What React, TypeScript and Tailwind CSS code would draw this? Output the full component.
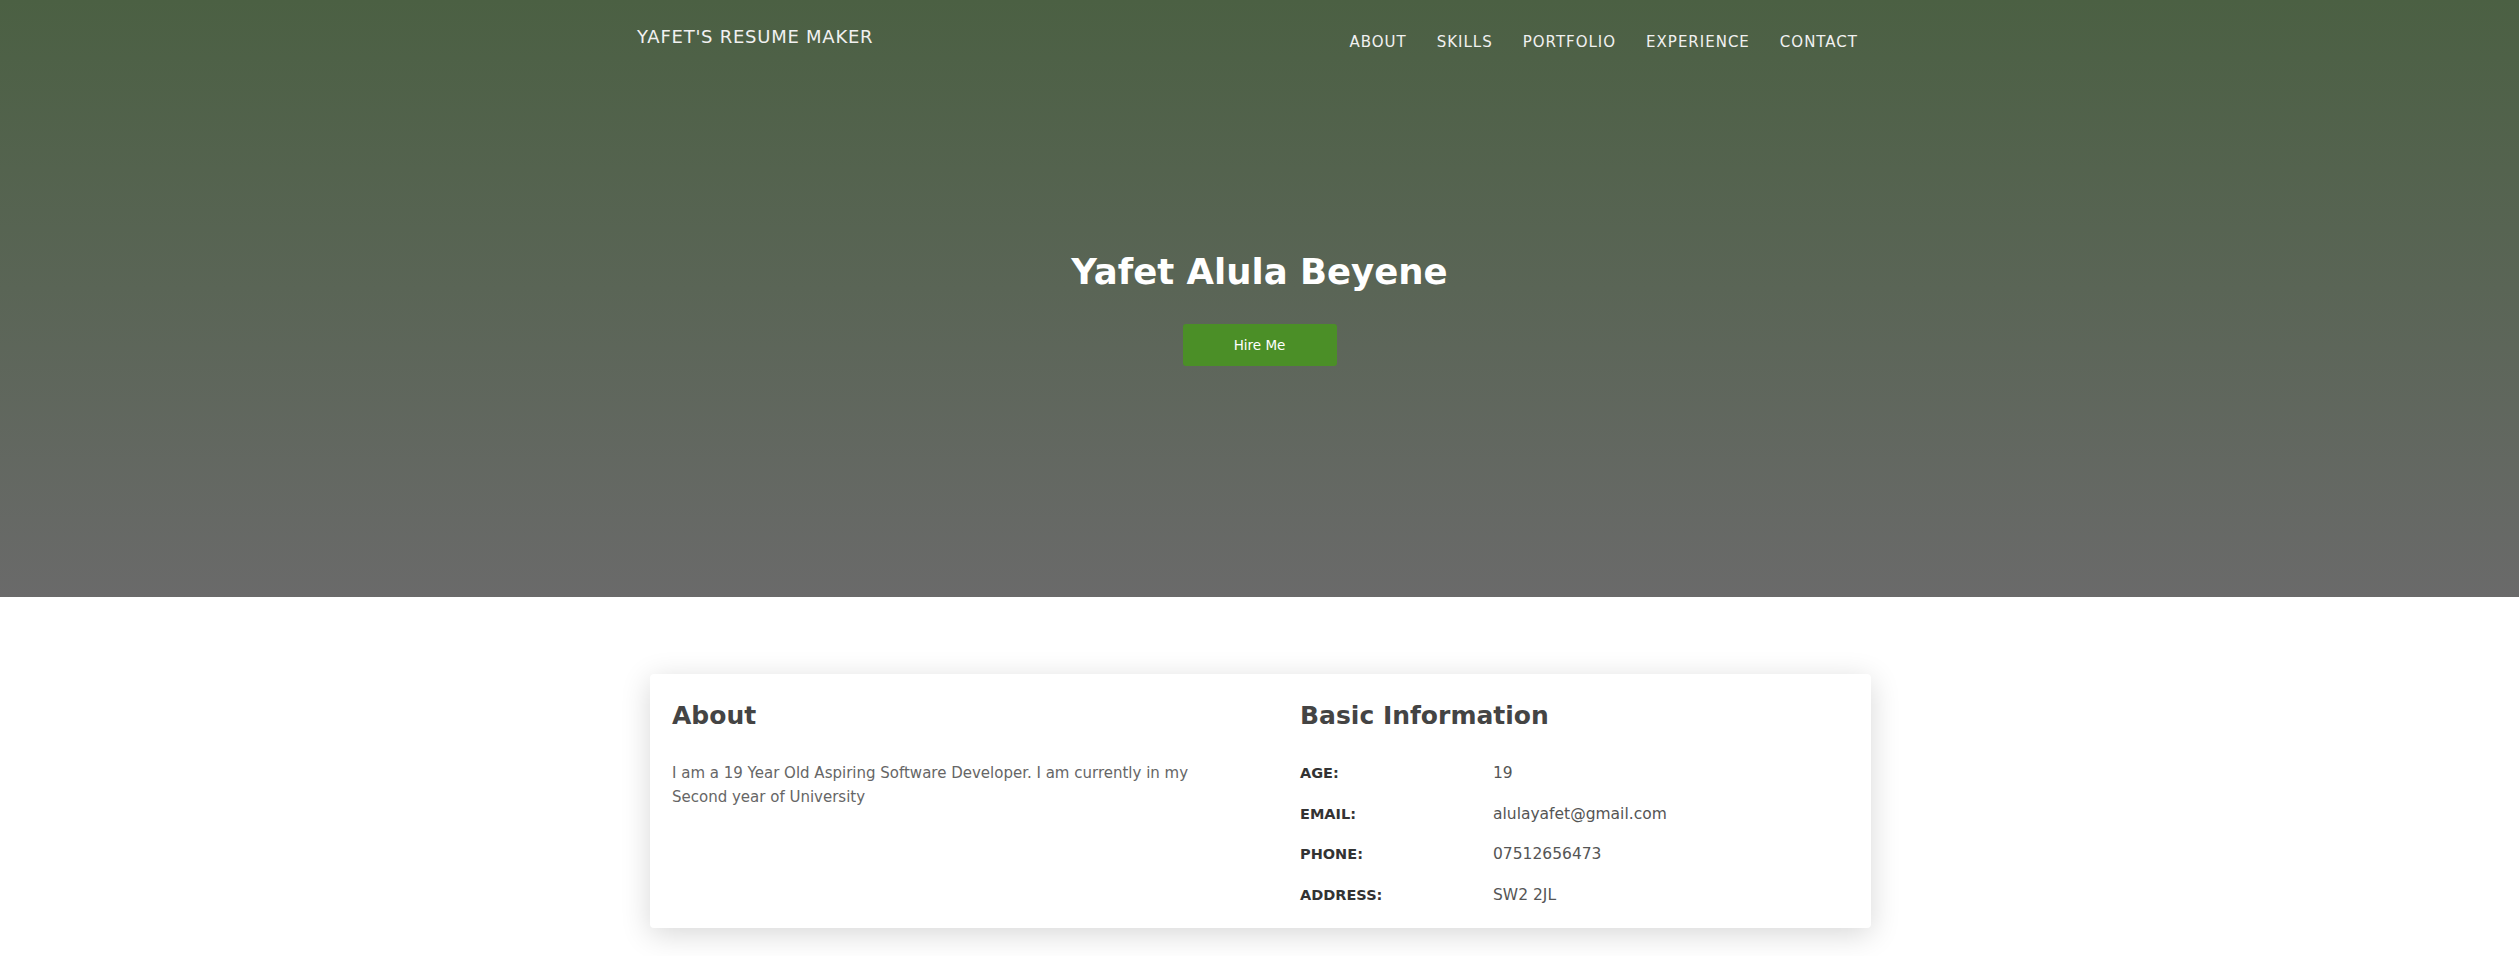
import React from "react";

const info = [
  ["AGE:", "19"],
  ["EMAIL:", "alulayafet@gmail.com"],
  ["PHONE:", "07512656473"],
  ["ADDRESS:", "SW2 2JL"],
];

export default function App() {
  return (
    <div className="min-h-[956px] bg-white font-['DejaVu_Sans',sans-serif]">
      <header className="h-[597px] bg-gradient-to-b from-[#4b6043] to-[#6a6a6a] flex flex-col">
        <nav className="ml-[637px] w-[1221px] flex justify-between">
          <div className="pt-[27px] text-[18px] leading-[20px] tracking-[0.75px] text-[#f1f1f1]">YAFET'S RESUME MAKER</div>
          <ul className="flex gap-[30px] pt-[33px] text-[15px] leading-[18px] tracking-[1px] text-[#f1f1f1]">
            <li>ABOUT</li>
            <li>SKILLS</li>
            <li>PORTFOLIO</li>
            <li>EXPERIENCE</li>
            <li>CONTACT</li>
          </ul>
        </nav>
        <div className="flex flex-col items-center pt-[199px]">
          <h1 className="text-[35.5px] leading-[44px] font-bold text-white">Yafet Alula Beyene</h1>
          <button className="mt-[30px] w-[154px] h-[42px] rounded-[3px] bg-[#4b8f27] text-[13.5px] text-white">Hire Me</button>
        </div>
      </header>
      <main className="pt-[77px]">
        <section className="ml-[650px] w-[1221px] h-[254px] bg-white rounded-[4px] shadow-[0_6px_30px_rgba(0,0,0,0.16)] grid grid-cols-[628px_1fr] pl-[22px] pt-[26px]">
          <div>
            <h2 className="text-[25px] leading-[32px] font-bold text-[#444]">About</h2>
            <p className="mt-[29px] w-[545px] text-[15px] leading-[24px] text-[#666]">
              I am a 19 Year Old Aspiring Software Developer. I am currently in my Second year of University
            </p>
          </div>
          <div>
            <h2 className="text-[25px] leading-[32px] font-bold text-[#444]">Basic Information</h2>
            <div className="mt-[29px] flex flex-col gap-[16.7px]">
              {info.map(([k, v]) => (
                <div key={k} className="grid grid-cols-[193px_1fr] leading-[24px]">
                  <span className="text-[14.5px] font-bold text-[#333]">{k}</span>
                  <span className="text-[15.5px] text-[#555]">{v}</span>
                </div>
              ))}
            </div>
          </div>
        </section>
      </main>
    </div>
  );
}
